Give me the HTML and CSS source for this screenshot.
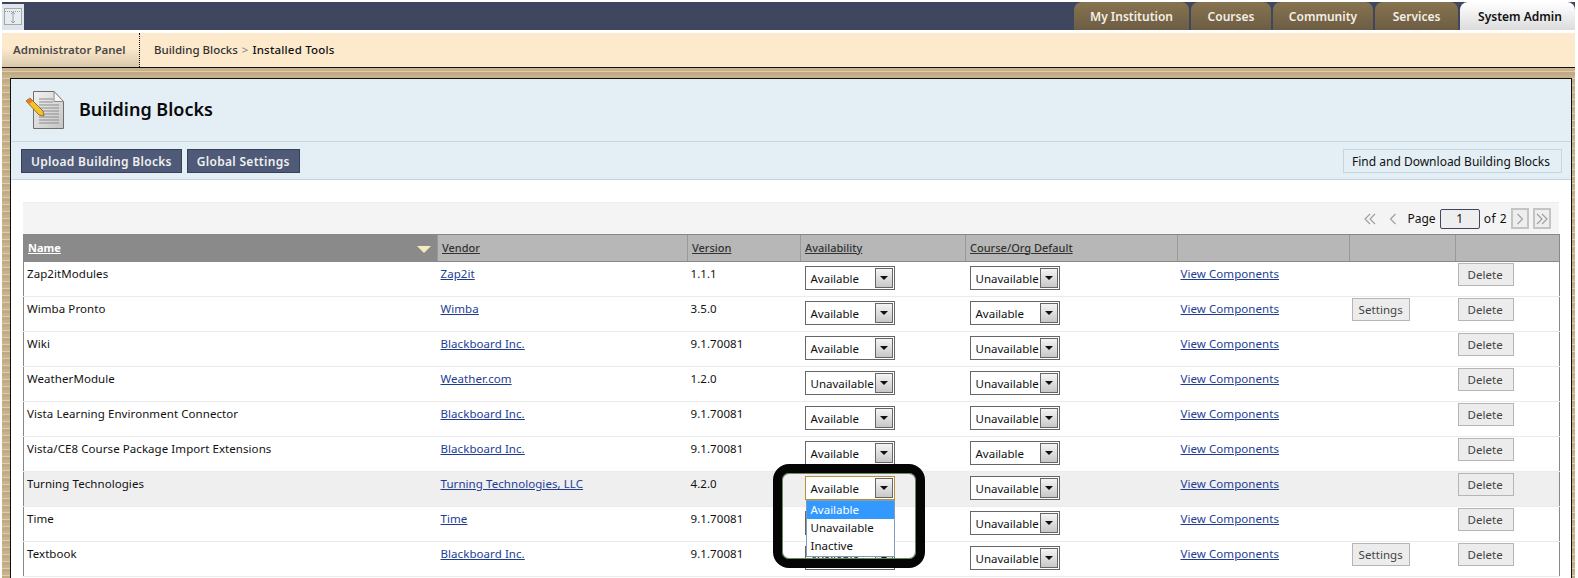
FILE: index.html
```html
<!DOCTYPE html>
<html lang="en">
<head>
    <meta charset="UTF-8">
    <title>Building Blocks - Installed Tools</title>
    <link rel="stylesheet" href="styles.css">
</head>
<body>
    <div class="topbar">
        <div class="collapse">
            <svg width="22" height="26" viewBox="0 0 22 26">
                <rect x="2.500" y="4.500" width="17" height="16" fill="#e6edf1" stroke="#a8a8a8"/>
                <path d="M3 7.500h16" stroke="#999" stroke-dasharray="1 1"/>
                <path d="M11 8v11M9 10l2-2 2 2M9 17l2 2 2-2" fill="none" stroke="#a0a0a0"/>
            </svg>
        </div>
        <ul class="tabs">
            <li class="tab tab-institution">My Institution</li>
            <li class="tab tab-courses">Courses</li>
            <li class="tab tab-community">Community</li>
            <li class="tab tab-services">Services</li>
            <li class="tab tab-active">System Admin</li>
        </ul>
    </div>

    <div class="crumbs">
        <div class="crumb-home">Administrator Panel</div>
        <div class="crumb-path">Building Blocks <span class="crumb-sep">&gt;</span> <span class="crumb-current">Installed Tools</span></div>
    </div>

    <div class="wood">
        <div class="panel">
            <div class="page-head">
                <svg class="page-icon" width="40" height="40" viewBox="0 0 40 40">
                    <defs>
                        <linearGradient id="sheet" x1="0" y1="0" x2="1" y2="1">
                            <stop offset="0" stop-color="#f2f2f2"/>
                            <stop offset="1" stop-color="#c4c4c4"/>
                        </linearGradient>
                    </defs>
                    <path d="M8.500 1.500H29l9.500 10v27h-30z" fill="url(#sheet)" stroke="#6e6e6e"/>
                    <path d="M29 1.500v10h9.500z" fill="#f6f6f6" stroke="#8a8a8a"/>
                    <path d="M14 9h14M14 12h14M14 15h20M14 18h20M14 21h20M14 24h20M14 27h20M14 30h20M14 33h20" stroke="#8b8b8b"/>
                    <path d="M1 11l4-3 13 13 1 5-5-1z" fill="#f2c230" stroke="#7a5a10" stroke-width="0.800"/>
                    <path d="M1 11l4-3 3 3-4 3z" fill="#e8782a"/>
                </svg>
                <h1>Building Blocks</h1>
            </div>
            <div class="actions">
                <a class="btn-dark">Upload Building Blocks</a>
                <a class="btn-dark">Global Settings</a>
                <a class="btn-light">Find and Download Building Blocks</a>
            </div>
            <div class="content">
                <div class="pager">
                    <svg class="pager-arrow" width="12" height="12" viewBox="0 0 12 12"><path d="M6 1L1 6l5 5M11 1L6 6l5 5" fill="none" stroke="#a0a0a0" stroke-width="1.200"/></svg>
                    <svg class="pager-arrow prev" width="8" height="12" viewBox="0 0 8 12"><path d="M6.500 1L1.500 6l5 5" fill="none" stroke="#a0a0a0" stroke-width="1.200"/></svg>
                    <span class="pager-label">Page</span>
                    <span class="pager-input">1</span>
                    <span class="pager-of">of 2</span>
                    <span class="pager-btn"><svg width="8" height="12" viewBox="0 0 8 12"><path d="M1.500 1l5 5-5 5" fill="none" stroke="#a0a0a0" stroke-width="1.200"/></svg></span>
                    <span class="pager-btn"><svg width="12" height="12" viewBox="0 0 12 12"><path d="M1 1l5 5-5 5M6 1l5 5-5 5" fill="none" stroke="#a0a0a0" stroke-width="1.200"/></svg></span>
                </div>
                <table class="tools">
                    <colgroup>
                        <col class="col-name"><col class="col-vendor"><col class="col-version"><col class="col-avail"><col class="col-default"><col class="col-view"><col class="col-settings"><col class="col-delete">
                    </colgroup>
                    <thead>
                        <tr>
                            <th class="sorted"><a>Name</a><span class="sort-arrow"></span></th>
                            <th><a>Vendor</a></th>
                            <th><a>Version</a></th>
                            <th><a>Availability</a></th>
                            <th><a>Course/Org Default</a></th>
                            <th></th>
                            <th></th>
                            <th></th>
                        </tr>
                    </thead>
                    <tbody>
                        <tr>
                            <td>Zap2itModules</td><td><a>Zap2it</a></td><td>1.1.1</td>
                            <td><div class="sel"><span>Available</span><i></i></div></td>
                            <td><div class="sel"><span>Unavailable</span><i></i></div></td>
                            <td><a>View Components</a></td><td></td>
                            <td><span class="btn-row">Delete</span></td>
                        </tr>
                        <tr>
                            <td>Wimba Pronto</td><td><a>Wimba</a></td><td>3.5.0</td>
                            <td><div class="sel"><span>Available</span><i></i></div></td>
                            <td><div class="sel"><span>Available</span><i></i></div></td>
                            <td><a>View Components</a></td><td><span class="btn-row btn-settings">Settings</span></td>
                            <td><span class="btn-row">Delete</span></td>
                        </tr>
                        <tr>
                            <td>Wiki</td><td><a>Blackboard Inc.</a></td><td>9.1.70081</td>
                            <td><div class="sel"><span>Available</span><i></i></div></td>
                            <td><div class="sel"><span>Unavailable</span><i></i></div></td>
                            <td><a>View Components</a></td><td></td>
                            <td><span class="btn-row">Delete</span></td>
                        </tr>
                        <tr>
                            <td>WeatherModule</td><td><a>Weather.com</a></td><td>1.2.0</td>
                            <td><div class="sel"><span>Unavailable</span><i></i></div></td>
                            <td><div class="sel"><span>Unavailable</span><i></i></div></td>
                            <td><a>View Components</a></td><td></td>
                            <td><span class="btn-row">Delete</span></td>
                        </tr>
                        <tr>
                            <td>Vista Learning Environment Connector</td><td><a>Blackboard Inc.</a></td><td>9.1.70081</td>
                            <td><div class="sel"><span>Available</span><i></i></div></td>
                            <td><div class="sel"><span>Unavailable</span><i></i></div></td>
                            <td><a>View Components</a></td><td></td>
                            <td><span class="btn-row">Delete</span></td>
                        </tr>
                        <tr>
                            <td>Vista/CE8 Course Package Import Extensions</td><td><a>Blackboard Inc.</a></td><td>9.1.70081</td>
                            <td><div class="sel"><span>Available</span><i></i></div></td>
                            <td><div class="sel"><span>Available</span><i></i></div></td>
                            <td><a>View Components</a></td><td></td>
                            <td><span class="btn-row">Delete</span></td>
                        </tr>
                        <tr class="hover">
                            <td>Turning Technologies</td><td><a>Turning Technologies, LLC</a></td><td>4.2.0</td>
                            <td>
                                <div class="sel sel-open"><span>Available</span><i></i>
                                    <ul class="dropdown">
                                        <li class="picked">Available</li>
                                        <li>Unavailable</li>
                                        <li>Inactive</li>
                                    </ul>
                                    <div class="callout"></div>
                                </div>
                            </td>
                            <td><div class="sel"><span>Unavailable</span><i></i></div></td>
                            <td><a>View Components</a></td><td></td>
                            <td><span class="btn-row">Delete</span></td>
                        </tr>
                        <tr>
                            <td>Time</td><td><a>Time</a></td><td>9.1.70081</td>
                            <td><div class="sel"><span>Available</span><i></i></div></td>
                            <td><div class="sel"><span>Unavailable</span><i></i></div></td>
                            <td><a>View Components</a></td><td></td>
                            <td><span class="btn-row">Delete</span></td>
                        </tr>
                        <tr>
                            <td>Textbook</td><td><a>Blackboard Inc.</a></td><td>9.1.70081</td>
                            <td><div class="sel"><span>Available</span><i></i></div></td>
                            <td><div class="sel"><span>Unavailable</span><i></i></div></td>
                            <td><a>View Components</a></td><td><span class="btn-row btn-settings">Settings</span></td>
                            <td><span class="btn-row">Delete</span></td>
                        </tr>
                    </tbody>
                </table>
            </div>
        </div>
    </div>
</body>
</html>
```

FILE: styles.css
```css
* {
    margin: 0;
    padding: 0;
    box-sizing: border-box;
    font-family: 'Noto Sans', 'DejaVu Sans', sans-serif;
}

html, body {
    height: 578px;
    overflow: hidden;
    background-color: #fff;
}

body {
    font-size: 11.5px;
    color: #111;
}

/* top navigation */
.topbar {
    display: flex;
    justify-content: space-between;
    height: 28px;
    margin: 2px 3px 0 2px;
    background-color: #3f4760;
}

.collapse {
    width: 22px;
    height: 26px;
    margin-top: 2px;
    background-color: #dce6ec;
}

.tabs {
    display: flex;
    gap: 2px;
    list-style: none;
}

.tab {
    height: 28px;
    line-height: 30px;
    text-align: center;
    font-size: 12px;
    font-weight: 600;
    color: #f4efe4;
    border-radius: 8px 8px 0 0;
    background: linear-gradient(to bottom, #86734f, #6d5d44);
}

.tab-institution { width: 115px; }
.tab-courses { width: 80px; }
.tab-community { width: 100px; }
.tab-services { width: 83px; }

.tab-active {
    width: 115px;
    padding-left: 5px;
    color: #111;
    background: linear-gradient(to bottom, #fff, #dcdcdc);
}

/* breadcrumb strip */
.crumbs {
    display: flex;
    height: 35px;
    margin: 3px 3px 0 2px;
    background-color: #fde9cb;
    border-bottom: 1px solid #111;
    line-height: 33px;
}

.crumb-home {
    width: 138px;
    padding-left: 11px;
    font-weight: 600;
    color: #4a4a4a;
    border-right: 1px dotted #111;
    background: linear-gradient(to bottom, #fde9cb 45%, #d9c8ad);
}

.crumb-path {
    padding-left: 14px;
    color: #333;
    font-weight: 500;
}

.crumb-sep {
    color: #888;
    padding: 0 1px;
}

.crumb-current {
    color: #111;
    font-weight: 500;
    letter-spacing: 0.2px;
}

/* wood frame */
.wood {
    height: 510px;
    margin: 0 3px 0 2px;
    padding: 10px 3px 0 8px;
    background-color: #cdb998;
    background-image: repeating-linear-gradient(to bottom, #c8b28c 0, #c8b28c 3px, #dccdb0 3px, #dccdb0 4px, #c2ab84 4px, #c2ab84 7px);
}

.panel {
    height: 100%;
    background-color: #fff;
    border: 1px solid #111;
    border-bottom: 0;
}

.page-head {
    display: flex;
    align-items: center;
    height: 63px;
    padding-left: 14px;
    background-color: #e3eff5;
    border-bottom: 1px solid #c5d5e0;
}

.page-head h1 {
    margin: -2px 0 0 14px;
    font-size: 18px;
    font-weight: 600;
    color: #0a0a0a;
}

.actions {
    display: flex;
    align-items: center;
    height: 38px;
    padding: 0 9px 0 10px;
    background-color: #e3eff5;
    border-bottom: 1px solid #c5d5e0;
}

.btn-dark {
    height: 24px;
    line-height: 24px;
    padding: 0 9px;
    margin-right: 5px;
    font-size: 12px;
    font-weight: 600;
    letter-spacing: 0.3px;
    color: #f0f0f0;
    background-color: #4e5a78;
    border: 1px solid #39415a;
}

.btn-light {
    height: 24px;
    line-height: 24px;
    padding: 0 11px 0 8px;
    margin-left: auto;
    font-size: 12px;
    color: #111;
    border: 1px solid #c5d5e0;
}

.content {
    padding: 22px 12px 0 12px;
}

/* pager above the table */
.pager {
    display: flex;
    align-items: center;
    justify-content: flex-end;
    height: 32px;
    padding-right: 8px;
    background-color: #f4f4f4;
    border-top: 1px solid #eee;
    font-size: 12px;
}

.pager-arrow.prev {
    margin-left: 13px;
}

.pager-label {
    margin-left: 10px;
}

.pager-input {
    width: 40px;
    height: 20px;
    margin-left: 4px;
    line-height: 18px;
    text-align: center;
    background-color: #eee;
    border: 1px solid #3f4760;
    border-radius: 2px;
}

.pager-of {
    margin-left: 4px;
    letter-spacing: 0.5px;
}

.pager-btn {
    display: flex;
    align-items: center;
    justify-content: center;
    width: 18px;
    height: 21px;
    margin-left: 4px;
    background-color: #eee;
    border: 2px solid #c4c4c4;
}

/* tools table */
.tools {
    width: 1537px;
    table-layout: fixed;
    border-collapse: collapse;
    border-left: 1px solid #888;
    border-right: 1px solid #888;
}

.col-name { width: 414px; }
.col-vendor { width: 250px; }
.col-version { width: 113px; }
.col-avail { width: 165px; }
.col-default { width: 212px; }
.col-view { width: 172px; }
.col-settings { width: 106px; }

.tools th {
    height: 27px;
    padding: 0 0 2px 4px;
    text-align: left;
    font-size: 11px;
    font-weight: 500;
    color: #333;
    background-color: #b7b7b7;
    border-top: 1px solid #888;
    border-bottom: 1px solid #888;
    border-left: 1px solid #999;
}

.tools th a {
    text-decoration: underline;
}

.tools th.sorted {
    position: relative;
    padding-left: 4px;
    color: #fff;
    font-weight: 700;
    background-color: #8a8a8a;
    border-left: 0;
}

.sort-arrow {
    position: absolute;
    right: 6px;
    top: 11px;
    border-left: 7px solid transparent;
    border-right: 7px solid transparent;
    border-top: 7px solid #f7ecc0;
}

.tools td {
    height: 35px;
    padding: 4px 0 0 3px;
    vertical-align: top;
    letter-spacing: 0.07px;
    border-bottom: 1px solid #ebebeb;
}

.tools td a {
    color: #1d3c96;
    text-decoration: underline;
}

.tools tr.hover td {
    background-color: #efefef;
}

/* fake select boxes, styled like the old combo control */
.sel {
    position: relative;
    display: flex;
    align-items: center;
    justify-content: space-between;
    width: 90px;
    height: 24px;
    margin-left: 1px;
    padding: 0 1px 0 5px;
    letter-spacing: 0;
    background-color: #fff;
    border: 1px solid #666;
}

.sel i {
    position: relative;
    flex: none;
    width: 18px;
    height: 20px;
    border: 1px solid #666;
    background: linear-gradient(to bottom, #f4f4f4, #c8c8c8);
}

.sel i::after {
    content: "";
    position: absolute;
    left: 4px;
    top: 7px;
    border-left: 4px solid transparent;
    border-right: 4px solid transparent;
    border-top: 4px solid #111;
}

.sel-open {
    border-color: #b8903c;
}

.dropdown {
    position: absolute;
    z-index: 2;
    left: 0;
    top: 23px;
    width: 89px;
    padding-bottom: 1px;
    list-style: none;
    background-color: #fff;
    border: 1px solid #7f9db9;
}

.dropdown li {
    height: 18px;
    line-height: 18px;
    padding-left: 4px;
}

.dropdown li.picked {
    color: #fff;
    background-color: #3399ff;
}

/* black marker someone drew round the open list */
.callout {
    position: absolute;
    z-index: 3;
    left: -33px;
    top: -13px;
    width: 152px;
    height: 104px;
    border: 9px solid #050505;
    border-radius: 16px;
    box-shadow: inset 0 0 0 1px #6a8a5a;
    pointer-events: none;
}

.btn-row {
    display: block;
    width: fit-content;
    height: 23px;
    line-height: 21px;
    margin: -3px 0 0 -1px;
    padding: 0 10px 0 9px;
    font-size: 11.5px;
    color: #444;
    background-color: #ececec;
    border: 1px solid #b5b5b5;
}

.btn-settings {
    padding: 0 6px;
}
```
